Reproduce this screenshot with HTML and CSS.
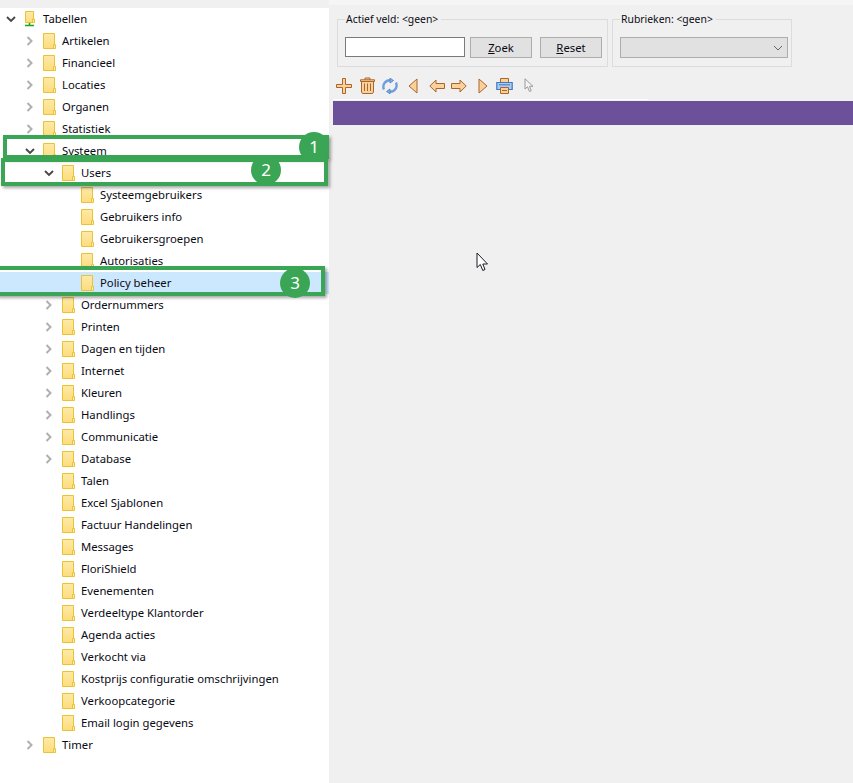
FILE: index.html
```html
<!DOCTYPE html>
<html lang="nl">
  <head>
    <meta charset="UTF-8" />
    <title>Tabellen</title>
    <link rel="stylesheet" href="styles.css">
  </head>
  <body>
    <svg class="defs" width="0" height="0">
      <defs>
        <linearGradient id="folder-fill" x1="0" y1="0" x2="0" y2="1">
          <stop offset="0" stop-color="#fdeaa8" />
          <stop offset="1" stop-color="#fddc7c" />
        </linearGradient>
        <symbol id="folder" viewBox="0 0 13 16">
          <path d="M.5.5H11.5V15.5H.5Z" fill="url(#folder-fill)" stroke="#ecc235" />
          <path d="M10.5 15.5V11.5H12.5V15.5Z" fill="#fdeeb8" stroke="#ecc235" />
        </symbol>
        <symbol id="closed" viewBox="0 0 12 12">
          <path d="M3.5 2 7.5 6 3.5 10" fill="none" stroke="#b0b0b0" stroke-width="2" />
        </symbol>
        <symbol id="open" viewBox="0 0 12 12">
          <path d="M2 4 6 8 10 4" fill="none" stroke="#484848" stroke-width="1.9" />
        </symbol>
      </defs>
    </svg>

    <div class="app">
      <!-- boom -->
      <nav class="tree">
        <div class="row">
          <svg class="twist"><use href="#open" /></svg>
          <svg class="folder root-icon" viewBox="0 0 13 16">
            <path d="M1.5.5H9.5V11.5H1.5Z" fill="url(#folder-fill)" stroke="#ecc235" />
            <path d="M8.5 11.5V8H10.5V11.5Z" fill="#fdeeb8" stroke="#ecc235" />
            <path d="M5.5 12V14M1 14.5H10" stroke="#18a818" stroke-width="1.6" fill="none" />
          </svg>
          <span>Tabellen</span>
        </div>
        <div class="row lvl1"><svg class="twist"><use href="#closed" /></svg><svg class="folder"><use href="#folder" /></svg><span>Artikelen</span></div>
        <div class="row lvl1"><svg class="twist"><use href="#closed" /></svg><svg class="folder"><use href="#folder" /></svg><span>Financieel</span></div>
        <div class="row lvl1"><svg class="twist"><use href="#closed" /></svg><svg class="folder"><use href="#folder" /></svg><span>Locaties</span></div>
        <div class="row lvl1"><svg class="twist"><use href="#closed" /></svg><svg class="folder"><use href="#folder" /></svg><span>Organen</span></div>
        <div class="row lvl1"><svg class="twist"><use href="#closed" /></svg><svg class="folder"><use href="#folder" /></svg><span>Statistiek</span></div>
        <div class="row lvl1"><svg class="twist"><use href="#open" /></svg><svg class="folder"><use href="#folder" /></svg><span>Systeem</span></div>
        <div class="row lvl2"><svg class="twist"><use href="#open" /></svg><svg class="folder"><use href="#folder" /></svg><span>Users</span></div>
        <div class="row lvl3"><i class="twist"></i><svg class="folder"><use href="#folder" /></svg><span>Systeemgebruikers</span></div>
        <div class="row lvl3"><i class="twist"></i><svg class="folder"><use href="#folder" /></svg><span>Gebruikers info</span></div>
        <div class="row lvl3"><i class="twist"></i><svg class="folder"><use href="#folder" /></svg><span>Gebruikersgroepen</span></div>
        <div class="row lvl3"><i class="twist"></i><svg class="folder"><use href="#folder" /></svg><span>Autorisaties</span></div>
        <div class="row lvl3 selected"><i class="twist"></i><svg class="folder"><use href="#folder" /></svg><span>Policy beheer</span></div>
        <div class="row lvl2"><svg class="twist"><use href="#closed" /></svg><svg class="folder"><use href="#folder" /></svg><span>Ordernummers</span></div>
        <div class="row lvl2"><svg class="twist"><use href="#closed" /></svg><svg class="folder"><use href="#folder" /></svg><span>Printen</span></div>
        <div class="row lvl2"><svg class="twist"><use href="#closed" /></svg><svg class="folder"><use href="#folder" /></svg><span>Dagen en tijden</span></div>
        <div class="row lvl2"><svg class="twist"><use href="#closed" /></svg><svg class="folder"><use href="#folder" /></svg><span>Internet</span></div>
        <div class="row lvl2"><svg class="twist"><use href="#closed" /></svg><svg class="folder"><use href="#folder" /></svg><span>Kleuren</span></div>
        <div class="row lvl2"><svg class="twist"><use href="#closed" /></svg><svg class="folder"><use href="#folder" /></svg><span>Handlings</span></div>
        <div class="row lvl2"><svg class="twist"><use href="#closed" /></svg><svg class="folder"><use href="#folder" /></svg><span>Communicatie</span></div>
        <div class="row lvl2"><svg class="twist"><use href="#closed" /></svg><svg class="folder"><use href="#folder" /></svg><span>Database</span></div>
        <div class="row lvl2"><i class="twist"></i><svg class="folder"><use href="#folder" /></svg><span>Talen</span></div>
        <div class="row lvl2"><i class="twist"></i><svg class="folder"><use href="#folder" /></svg><span>Excel Sjablonen</span></div>
        <div class="row lvl2"><i class="twist"></i><svg class="folder"><use href="#folder" /></svg><span>Factuur Handelingen</span></div>
        <div class="row lvl2"><i class="twist"></i><svg class="folder"><use href="#folder" /></svg><span>Messages</span></div>
        <div class="row lvl2"><i class="twist"></i><svg class="folder"><use href="#folder" /></svg><span>FloriShield</span></div>
        <div class="row lvl2"><i class="twist"></i><svg class="folder"><use href="#folder" /></svg><span>Evenementen</span></div>
        <div class="row lvl2"><i class="twist"></i><svg class="folder"><use href="#folder" /></svg><span>Verdeeltype Klantorder</span></div>
        <div class="row lvl2"><i class="twist"></i><svg class="folder"><use href="#folder" /></svg><span>Agenda acties</span></div>
        <div class="row lvl2"><i class="twist"></i><svg class="folder"><use href="#folder" /></svg><span>Verkocht via</span></div>
        <div class="row lvl2"><i class="twist"></i><svg class="folder"><use href="#folder" /></svg><span>Kostprijs configuratie omschrijvingen</span></div>
        <div class="row lvl2"><i class="twist"></i><svg class="folder"><use href="#folder" /></svg><span>Verkoopcategorie</span></div>
        <div class="row lvl2"><i class="twist"></i><svg class="folder"><use href="#folder" /></svg><span>Email login gegevens</span></div>
        <div class="row lvl1"><svg class="twist"><use href="#closed" /></svg><svg class="folder"><use href="#folder" /></svg><span>Timer</span></div>
      </nav>

      <!-- rechterkant -->
      <main class="content">
        <div class="filters">
          <fieldset class="group group-search">
            <legend>Actief veld: &lt;geen&gt;</legend>
            <input class="search-input" type="text" />
            <button class="btn btn-zoek"><u>Z</u>oek</button>
            <button class="btn"><u>R</u>eset</button>
          </fieldset>
          <fieldset class="group group-rubriek">
            <legend>Rubrieken: &lt;geen&gt;</legend>
            <div class="combo">
              <svg width="10" height="6" viewBox="0 0 10 6"><path d="M1 1 5 5 9 1" fill="none" stroke="#666" /></svg>
            </div>
          </fieldset>
        </div>

        <div class="toolbar">
          <svg class="tool t-plus" width="16" height="16" viewBox="0 0 16 16">
            <path d="M6.5.5H9.5V6.5H15.5V9.5H9.5V15.5H6.5V9.5H.5V6.5H6.5Z" fill="#fcd09a" stroke="#a8662c" />
          </svg>
          <svg class="tool t-trash" width="15" height="17" viewBox="0 0 15 17">
            <path d="M5 2.5V1H10V2.5M.5 2.8H14.5V4.5H.5Z" fill="#fcd09a" stroke="#a8662c" />
            <path d="M1.5 4.5H13.5V15L12.5 16.5H2.5L1.5 15Z" fill="#fcd09a" stroke="#a8662c" />
            <path d="M4.5 6.5V14M7.5 6.5V14M10.5 6.5V14" stroke="#a8662c" />
          </svg>
          <svg class="tool t-refresh" width="16" height="16" viewBox="0 0 16 16">
            <path d="M2 11.5C.2 7.5 2.5 2.5 8 2.2M14 4.5C15.8 8.500 13.500 13.500 8 13.800" fill="none" stroke="#6f9fdc" stroke-width="2.4" />
            <path d="M8 .2 11.500 2.500 8 5ZM8 11 4.500 13.500 8 15.800Z" fill="#8ab4ea" stroke="#3f78c4" stroke-width=".8" />
          </svg>
          <svg class="tool t-first" width="10" height="16" viewBox="0 0 10 16">
            <path d="M9 1V15L1 8Z" fill="#fcd09a" stroke="#a8662c" />
          </svg>
          <svg class="tool t-prev" width="16" height="14" viewBox="0 0 16 14">
            <path d="M.8 7 7 1V4.500H15.500V9.500H7V13Z" fill="#fcd09a" stroke="#a8662c" />
          </svg>
          <svg class="tool t-next" width="16" height="14" viewBox="0 0 16 14">
            <path d="M15.200 7 9 1V4.500H.5V9.500H9V13Z" fill="#fcd09a" stroke="#a8662c" />
          </svg>
          <svg class="tool t-last" width="10" height="16" viewBox="0 0 10 16">
            <path d="M1 1V15L9 8Z" fill="#fcd09a" stroke="#a8662c" />
          </svg>
          <svg class="tool t-print" width="17" height="16" viewBox="0 0 17 16">
            <path d="M4.500.5H12.500V5H4.500Z" fill="#fcd09a" stroke="#a8662c" />
            <path d="M.8 4.500H16.200V11.500H.8Z" fill="#a9cdf2" stroke="#3f78c4" stroke-width="1.200" />
            <path d="M3 6.800H14" stroke="#3f78c4" />
            <path d="M4.500 9.500H12.500V15.500H4.500Z" fill="#fcd09a" stroke="#a8662c" />
            <path d="M6 12.500H11" stroke="#a8662c" />
          </svg>
          <svg class="tool t-pointer" width="10" height="15" viewBox="0 0 10 15">
            <path d="M1 .8V11L3.500 8.800 5.500 13.500 7.200 12.700 5.500 8.300H9Z" fill="#f4f4f4" stroke="#9a9a9a" />
          </svg>
        </div>

        <div class="band"></div>
      </main>
    </div>

    <!-- annotaties over de boom -->
    <div class="mark mark-1"></div>
    <div class="mark mark-2"></div>
    <div class="mark mark-3"></div>
    <div class="badge badge-1">1</div>
    <div class="badge badge-2">2</div>
    <div class="badge badge-3">3</div>

    <svg class="cursor" width="13" height="20" viewBox="0 0 13 20">
      <path d="M1 1V15.500L4.300 12.500 6.800 18.500 9 17.500 6.800 12H11.500Z" fill="#fff" stroke="#1a1a2a" />
    </svg>
  </body>
</html>
```

FILE: styles.css
```css
html,
body {
  margin: 0;
  height: 100%;
}
body {
  font-family: "Noto Sans", sans-serif;
  font-size: 11.3px;
  color: #0a0a14;
  background-color: #f0f0f0;
  overflow: hidden;
  position: relative;
}
.defs {
  position: absolute;
}
.app {
  display: flex;
  height: 783px;
}

/* boom */
.tree {
  width: 329px;
  flex-shrink: 0;
  margin-top: 8px;
  background-color: white;
}
.row {
  display: flex;
  align-items: center;
  height: 22px;
  padding-left: 5px;
}
.row span {
  margin-top: -2px;
}
.row.lvl1 {
  padding-left: 24px;
}
.row.lvl2 {
  padding-left: 43px;
}
.row.lvl3 {
  padding-left: 62px;
}
.row.selected {
  background-color: #cce8ff;
}
.twist {
  display: block;
  width: 12px;
  height: 12px;
  margin-right: 7px;
}
.folder {
  width: 13px;
  height: 16px;
  margin-right: 6px;
  flex-shrink: 0;
}

/* rechterkant */
.content {
  flex-grow: 1;
  padding: 5px 0 0 4px;
  background: linear-gradient(#f5f5f5 5px, #f0f0f0 5px);
}
.filters {
  display: flex;
  gap: 4px;
  height: 63px;
  padding-left: 4px;
  box-sizing: border-box;
}
.group {
  margin: 7px 0 0 0;
  height: 55px;
  padding: 0 0 0 7px;
  box-sizing: border-box;
  border: 1px solid #dcdcdc;
  display: flex;
  align-items: flex-start;
}
.group legend {
  padding: 0 3px 0 1px;
  font-size: 10.4px;
  line-height: 14px;
}
.group-search {
  width: 271px;
}
.group-rubriek {
  width: 180px;
}
.search-input {
  width: 120px;
  height: 20px;
  margin: 11px 5px 0 0;
  padding: 0;
  box-sizing: border-box;
  border: 1px solid #7a7a7a;
  background-color: white;
}
.btn {
  width: 62px;
  height: 21px;
  margin: 11px 0 0 0;
  padding: 0;
  border: 1px solid #adadad;
  background-color: #e1e1e1;
  font-family: inherit;
  font-size: 11.3px;
  color: #0a0a14;
}
.btn-zoek {
  margin-right: 8px;
}
.combo {
  width: 168px;
  height: 21px;
  margin-top: 11px;
  box-sizing: border-box;
  border: 1px solid #adadad;
  background-color: #e1e1e1;
  display: flex;
  align-items: center;
  justify-content: flex-end;
  padding-right: 4px;
}
.toolbar {
  display: flex;
  align-items: center;
  height: 32px;
  box-sizing: border-box;
  padding: 4px 0 0 3px;
  border-bottom: 1px solid white;
  width: 315px;
}
.tool {
  flex-shrink: 0;
}
.t-trash {
  margin-left: 8px;
}
.t-refresh {
  margin-left: 7px;
}
.t-first {
  margin-left: 10px;
}
.t-prev {
  margin-left: 11px;
}
.t-next {
  margin-left: 6px;
}
.t-last {
  margin-left: 11px;
}
.t-print {
  margin-left: 8px;
}
.t-pointer {
  margin-left: 11px;
}
.band {
  height: 24px;
  margin-top: 1px;
  background-color: #6c5099;
}

/* annotaties */
.mark {
  position: absolute;
  box-sizing: border-box;
  border: 4px solid #3aa655;
  box-shadow: 2px 2px 3px rgba(0, 0, 0, 0.35);
}
.mark-1 {
  left: 3px;
  top: 135px;
  width: 326px;
  height: 24px;
}
.mark-2 {
  left: 1px;
  top: 158px;
  width: 327px;
  height: 28px;
}
.mark-3 {
  left: -4px;
  top: 266px;
  width: 329px;
  height: 30px;
}
.badge {
  position: absolute;
  width: 30px;
  height: 30px;
  border-radius: 50%;
  background-color: #3aa655;
  color: white;
  font-size: 17px;
  line-height: 29px;
  text-align: center;
}
.badge-1 {
  left: 299px;
  top: 132px;
}
.badge-2 {
  left: 251px;
  top: 155px;
}
.badge-3 {
  left: 280px;
  top: 268px;
}
.cursor {
  position: absolute;
  left: 476px;
  top: 252px;
}
```
